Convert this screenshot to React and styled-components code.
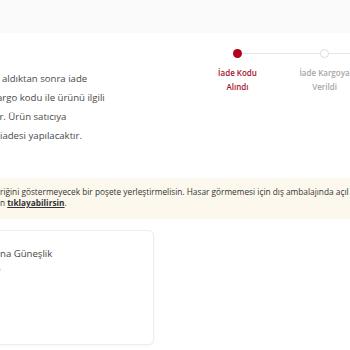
import React from 'react';
import styled, {createGlobalStyle} from 'styled-components';

const GlobalStyle = createGlobalStyle`
  html, body {
    margin: 0;
    padding: 0;
    background: #ffffff;
    overflow: hidden;
  }
  body {
    width: 350px;
    height: 350px;
    font-family: "Open Sans", "Liberation Sans", sans-serif;
  }
`

const StyledDivPage = styled.div`
  width: 350px;
  height: 350px;
  overflow: hidden;
`
const StyledDivTopBand = styled.div`
  height: 33px;
  background-color: #fafafa;
`
const StyledDivStatusRow = styled.div`
  display: flex;
  height: 145px;
`
const StyledDivInfo = styled.div`
  flex: 0 0 194px;
  padding-top: 36px;
  overflow: hidden;
`
const StyledPLine = styled.p`
  margin: 0;
  white-space: nowrap;
  font-size: 9.6px;
  line-height: 19px;
  color: #4a4a4a;
  text-indent: ${props => props.$indent || 0}px;
`
const StyledDivSteps = styled.div`
  display: flex;
  flex: 0 0 auto;
  padding-top: 12px;
`
const StyledDivStep = styled.div`
  position: relative;
  flex: 0 0 87px;
  display: flex;
  flex-direction: column;
  align-items: center;

  &::after {
    content: '';
    position: absolute;
    top: 8px;
    left: 50%;
    width: 100%;
    height: 1px;
    background-color: #e6e6e6;
  }
`
const StyledSpanDot = styled.span`
  position: relative;
  z-index: 1;
  box-sizing: border-box;
  width: 9px;
  height: 9px;
  margin-top: 4px;
  border-radius: 50%;
  background-color: ${props => props.$active ? '#b5001c' : '#ffffff'};
  border: ${props => props.$active ? 'none' : '1.5px solid #dcdcdc'};
`
const StyledSpanLabel = styled.span`
  margin-top: 8px;
  font-size: 8px;
  line-height: 14px;
  font-weight: 600;
  text-align: center;
  white-space: nowrap;
  color: ${props => props.$active ? '#a3142a' : '#a6a6a6'};
`
const StyledDivNotice = styled.div`
  height: 41px;
  box-sizing: border-box;
  padding-top: 8px;
  background-color: #fdf8ee;
  overflow: hidden;
`
const StyledPNotice = styled.p`
  margin: 0;
  white-space: nowrap;
  font-size: 8.3px;
  line-height: 11px;
  color: #333333;
`
const StyledALink = styled.a`
  font-weight: 700;
  color: #333333;
  text-decoration: underline;
`
const StyledDivCard = styled.div`
  width: 200px;
  height: 115px;
  margin: 11px 0 0 -46px;
  box-sizing: border-box;
  padding: 16px 0 0 46px;
  background: #ffffff;
  border: 1px solid #eeeeee;
  border-radius: 5px;
  box-shadow: 0 1px 3px rgba(0, 0, 0, 0.04);
`
const StyledPCardTitle = styled.p`
  margin: 0;
  font-size: 9.6px;
  line-height: 14px;
  color: #444444;
  text-indent: -1px;
`
const StyledPCardSub = styled.p`
  margin: 2px 0 0;
  font-size: 7.6px;
  line-height: 11px;
  color: #888888;
  text-indent: -4px;
`

export default class App extends React.Component {
  render() {
    return (
      <StyledDivPage>
        <GlobalStyle/>
        <StyledDivTopBand/>

        <StyledDivStatusRow>
          <StyledDivInfo>
            <StyledPLine $indent={2}>aldıktan sonra iade</StyledPLine>
            <StyledPLine $indent={-3}>argo kodu ile ürünü ilgili</StyledPLine>
            <StyledPLine $indent={-3}>ir. Ürün satıcıya</StyledPLine>
            <StyledPLine $indent={0}>iadesi yapılacaktır.</StyledPLine>
          </StyledDivInfo>

          <StyledDivSteps>
            <StyledDivStep>
              <StyledSpanDot $active/>
              <StyledSpanLabel $active>İade Kodu<br/>Alındı</StyledSpanLabel>
            </StyledDivStep>
            <StyledDivStep>
              <StyledSpanDot/>
              <StyledSpanLabel>İade Kargoya<br/>Verildi</StyledSpanLabel>
            </StyledDivStep>
          </StyledDivSteps>
        </StyledDivStatusRow>

        <StyledDivNotice>
          <StyledPNotice>riğini göstermeyecek bir poşete yerleştirmelisin. Hasar görmemesi için dış ambalajında açıl</StyledPNotice>
          <StyledPNotice>n <StyledALink>tıklayabilirsin</StyledALink>.</StyledPNotice>
        </StyledDivNotice>

        <StyledDivCard>
          <StyledPCardTitle>na Güneşlik</StyledPCardTitle>
          <StyledPCardSub>s</StyledPCardSub>
        </StyledDivCard>
      </StyledDivPage>
    );
  }
}
